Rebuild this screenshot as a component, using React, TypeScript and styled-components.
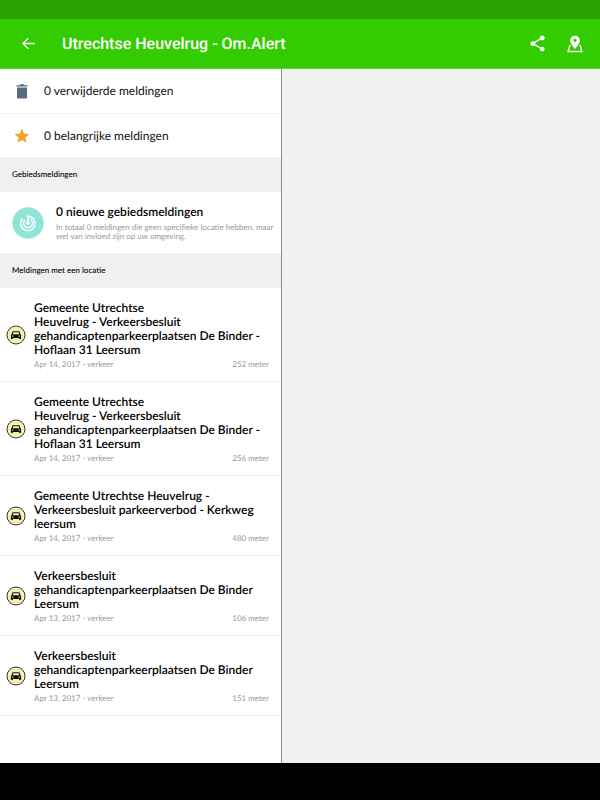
import React from "react";
import styled, { createGlobalStyle } from "styled-components";

const GlobalStyle = createGlobalStyle`
  * { box-sizing: border-box; }
  body { margin: 0; font-family: Lato, "Liberation Sans", sans-serif; color: #111; background: #000; text-rendering: geometricPrecision; }
  h1, h2, h3, p, ul { margin: 0; padding: 0; }
  ul { list-style: none; }
`;

const Screen = styled.div`
  min-height: 100vh;
  display: flex;
  flex-direction: column;
`;

const StatusBar = styled.div`
  height: 19px;
  background: #29a300;
`;

const Toolbar = styled.header`
  height: 50px;
  display: flex;
  align-items: center;
  padding: 0 13px 0 16px;
  background: #33cc00;
  border-bottom: 1px solid #5fd23c;
  color: #fff;
`;

const Title = styled.h1`
  flex: 1;
  margin-left: 22px;
  font: 500 16px/24px Roboto, sans-serif;
  white-space: nowrap;
`;

const IconButton = styled.button`
  width: 24px;
  height: 24px;
  display: grid;
  place-items: center;
  padding: 0;
  border: 0;
  background: none;
  color: inherit;
  cursor: pointer;
`;

const Actions = styled.div`
  display: flex;
  gap: 14px;
`;

const Content = styled.main`
  flex: 1;
  display: flex;
  background: #f1f1f1;
`;

const Sidebar = styled.section`
  width: 47%;
  background: #fff;
  border-right: 1px solid #8c8c8c;
`;

const Detail = styled.section`
  flex: 1;
`;

const NavigationBar = styled.footer`
  height: 37px;
  background: #000;
`;

const SummaryRow = styled.a`
  height: 44px;
  display: flex;
  align-items: center;
  gap: 12px;
  padding: 0 12px;
  color: #111;
  font-size: 12px;
  line-height: 16px;
  text-decoration: none;

  & + & { border-top: 1px solid #f3f3f3; }
`;

const SummaryIcon = styled.span`
  width: 20px;
  display: grid;
  place-items: center;
`;

const SectionHeading = styled.h2`
  height: 35px;
  padding: 0 12px;
  background: #f0f0f0;
  color: #000;
  font-size: 8px;
  font-weight: 500;
  line-height: 35px;
`;

const AreaRow = styled.a`
  height: 61px;
  display: flex;
  align-items: center;
  gap: 12px;
  padding: 0 4px 0 12px;
  color: #000;
  text-decoration: none;
`;

const AreaText = styled.div`
  flex: 1;
`;

const ItemTitle = styled.h3`
  color: #000;
  font-size: 12px;
  font-weight: 600;
  line-height: 14px;
  white-space: pre-line;
`;

const AreaDescription = styled.p`
  margin-top: 4px;
  color: #999;
  font-size: 8px;
  line-height: 9px;
  white-space: pre-line;
`;

const ReportRow = styled.a`
  display: flex;
  align-items: center;
  gap: 8px;
  padding: 0 12px 0 6px;
  border-bottom: 1px solid #ededed;
  text-decoration: none;
`;

const ReportBody = styled.div`
  flex: 1;
  min-width: 0;
  padding: 13px 0 10px;
`;

const Meta = styled.div`
  display: flex;
  justify-content: space-between;
  color: #999;
  font-size: 8px;
  line-height: 14px;
`;

const BackIcon = () => (
  <svg width="17" height="17" viewBox="0 0 24 24" fill="currentColor" aria-hidden="true">
    <path d="M21 11.100H6.500l5.900-5.700L11.100 4l-8.300 8 8.300 8 1.300-1.400-5.900-5.700H21z" />
  </svg>
);

const ShareIcon = () => (
  <svg width="19" height="19" viewBox="0 0 24 24" fill="currentColor" aria-hidden="true">
    <path d="M18 16.08c-.76 0-1.44.3-1.96.77L8.91 12.7c.05-.23.09-.46.09-.7s-.04-.47-.09-.7l7.05-4.11c.54.5 1.25.81 2.04.81 1.66 0 3-1.34 3-3s-1.34-3-3-3-3 1.34-3 3c0 .24.04.47.09.7L8.04 9.81C7.5 9.31 6.79 9 6 9c-1.66 0-3 1.34-3 3s1.34 3 3 3c.79 0 1.5-.31 2.04-.81l7.12 4.16c-.05.21-.08.43-.08.65 0 1.61 1.31 2.92 2.92 2.92s2.92-1.31 2.92-2.92-1.31-2.92-2.92-2.92z" />
  </svg>
);

const MapPinIcon = () => (
  <svg width="16" height="18" viewBox="0 0 16 18" aria-hidden="true">
    <path d="M3.6 10.800H2.700L1.200 16.400h13.600l-1.500-5.600h-.9" fill="none" stroke="currentColor" strokeWidth="1.500" />
    <path
      fill="currentColor"
      fillRule="evenodd"
      d="M8 .7a4.800 4.800 0 0 0-4.800 4.800C3.200 9 8 14 8 14s4.800-5 4.800-8.500A4.800 4.800 0 0 0 8 .7zm0 3a1.700 1.700 0 1 1 0 3.400 1.700 1.700 0 0 1 0-3.400z"
    />
  </svg>
);

const TrashIcon = () => (
  <svg width="12" height="15" viewBox="0 0 12 15" fill="#596b82" aria-hidden="true">
    <path d="M.3 1.200h3.200L4.300.3h3.400l.8.9h3.200v1.300H.3zM1 3.500h10v9.700c0 .8-.5 1.300-1.300 1.300H2.300c-.8 0-1.300-.5-1.300-1.300z" />
  </svg>
);

const StarIcon = () => (
  <svg width="18" height="18" viewBox="0 0 24 24" fill="#f0a428" aria-hidden="true">
    <path d="M12 17.270 18.180 21l-1.640-7.030L22 9.240l-7.190-.61L12 2 9.190 8.630 2 9.240l5.460 4.730L5.820 21z" />
  </svg>
);

const RadarIcon = () => (
  <svg width="32" height="32" viewBox="0 0 32 32" aria-hidden="true">
    <circle cx="16" cy="16" r="15.700" fill="#8fe5d8" />
    <g fill="none" stroke="#fff" strokeWidth="1.400">
      <path d="M16 9.200a7.200 7.200 0 1 1-5.400 2.200" />
      <path d="M18.300 12.300a4.500 4.500 0 1 1-5.100.4" />
      <path d="M16 8.600v7.600" strokeWidth="1.800" />
    </g>
    <circle cx="16" cy="16.300" r="1.700" fill="#fff" />
  </svg>
);

const CarIcon = () => (
  <svg width="20" height="20" viewBox="0 0 20 20" aria-hidden="true">
    <circle cx="10" cy="10" r="9" fill="#f5f2b0" stroke="#333" strokeWidth="1" />
    <path
      fill="#111"
      fillRule="evenodd"
      d="M7.100 6.200h5.800c.4 0 .7.200.8.600l.8 2.400.6.700v4h-1.900v-.8H6.800v.8H4.900v-4l.6-.7.800-2.400c.1-.4.400-.6.800-.6zm.200 1-.6 2h6.600l-.6-2zM6 10.400v1h1.600v-.6zm8 0-1.600.4v.6H14z"
    />
  </svg>
);

type Report = { title: string; date: string; distance: string };

const binderTitle =
  "Gemeente Utrechtse\nHeuvelrug - Verkeersbesluit gehandicaptenparkeerplaatsen De Binder - Hoflaan 31 Leersum";

const reports: Report[] = [
  { title: binderTitle, date: "Apr 14, 2017", distance: "252 meter" },
  { title: binderTitle, date: "Apr 14, 2017", distance: "256 meter" },
  {
    title: "Gemeente Utrechtse Heuvelrug - Verkeersbesluit parkeerverbod - Kerkweg leersum",
    date: "Apr 14, 2017",
    distance: "480 meter",
  },
  {
    title: "Verkeersbesluit gehandicaptenparkeerplaatsen De Binder Leersum",
    date: "Apr 13, 2017",
    distance: "106 meter",
  },
  {
    title: "Verkeersbesluit gehandicaptenparkeerplaatsen De Binder Leersum",
    date: "Apr 13, 2017",
    distance: "151 meter",
  },
];

export default function App() {
  return (
    <>
      <GlobalStyle />
      <Screen>
        <StatusBar />
        <Toolbar>
          <IconButton aria-label="Terug">
            <BackIcon />
          </IconButton>
          <Title>Utrechtse Heuvelrug - Om.Alert</Title>
          <Actions>
            <IconButton aria-label="Delen">
              <ShareIcon />
            </IconButton>
            <IconButton aria-label="Kaart">
              <MapPinIcon />
            </IconButton>
          </Actions>
        </Toolbar>
        <Content>
          <Sidebar>
            <SummaryRow href="#verwijderd">
              <SummaryIcon>
                <TrashIcon />
              </SummaryIcon>
              0 verwijderde meldingen
            </SummaryRow>
            <SummaryRow href="#belangrijk">
              <SummaryIcon>
                <StarIcon />
              </SummaryIcon>
              0 belangrijke meldingen
            </SummaryRow>
            <SectionHeading>Gebiedsmeldingen</SectionHeading>
            <AreaRow href="#gebied">
              <RadarIcon />
              <AreaText>
                <ItemTitle>0 nieuwe gebiedsmeldingen</ItemTitle>
                <AreaDescription>
                  In totaal 0 meldingen die geen specifieke locatie hebben, maar wel van invloed zijn op uw omgeving.
                </AreaDescription>
              </AreaText>
            </AreaRow>
            <SectionHeading>Meldingen met een locatie</SectionHeading>
            <ul>
              {reports.map((report) => (
                <li key={report.distance}>
                  <ReportRow href="#melding">
                    <CarIcon />
                    <ReportBody>
                      <ItemTitle>{report.title}</ItemTitle>
                      <Meta>
                        <span>{report.date} - verkeer</span>
                        <span>{report.distance}</span>
                      </Meta>
                    </ReportBody>
                  </ReportRow>
                </li>
              ))}
            </ul>
          </Sidebar>
          <Detail />
        </Content>
        <NavigationBar />
      </Screen>
    </>
  );
}
